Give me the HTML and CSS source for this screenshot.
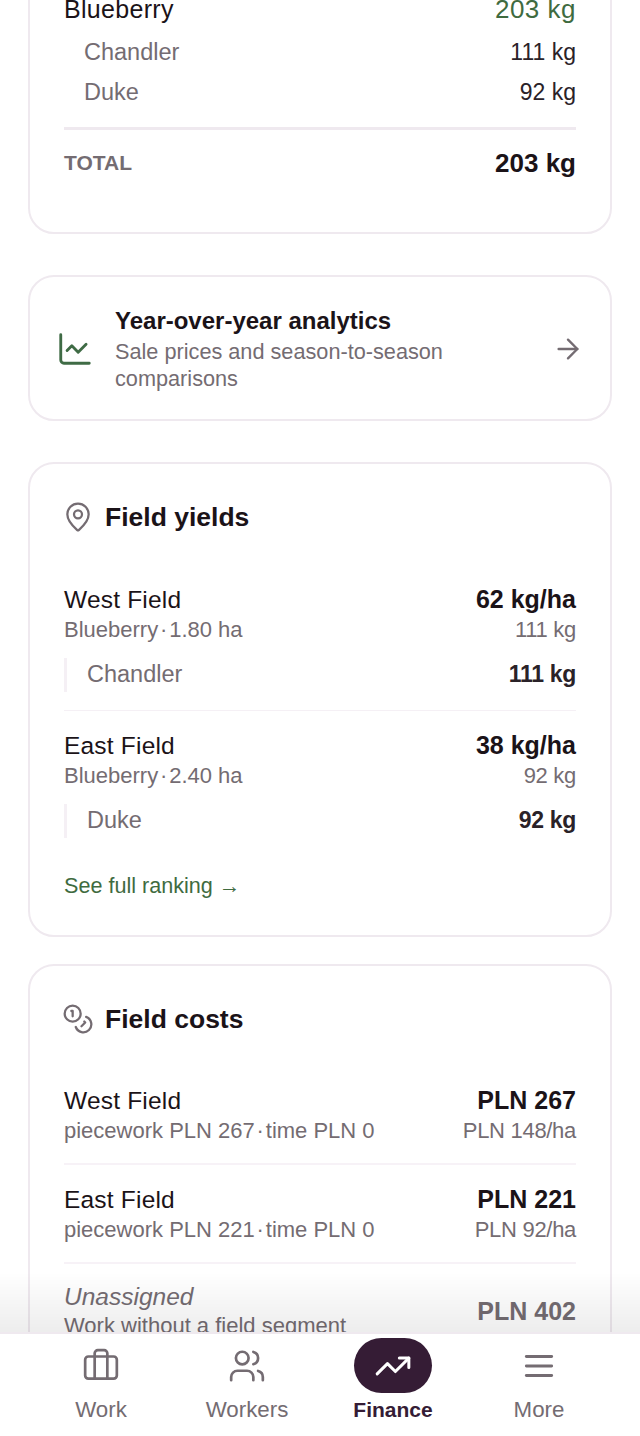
FILE: index.html
```html
<!DOCTYPE html>
<html lang="en">
<head>
    <meta charset="UTF-8">
    <meta name="viewport" content="width=device-width, initial-scale=1.0">
    <title>Finance</title>
    <link rel="stylesheet" href="styles.css">
</head>
<body>
    <main class="scroll">
        <!-- harvest totals, scrolled partly off the top -->
        <section class="card card-totals">
            <div class="row row-crop">
                <span class="crop-name">Blueberry</span>
                <span class="crop-total">203 kg</span>
            </div>
            <div class="row row-variety">
                <span class="variety">Chandler</span>
                <span class="variety-val">111 kg</span>
            </div>
            <div class="row row-variety">
                <span class="variety">Duke</span>
                <span class="variety-val">92 kg</span>
            </div>
            <div class="row row-total">
                <span class="total-label">TOTAL</span>
                <span class="total-val">203 kg</span>
            </div>
        </section>

        <section class="card card-link">
            <svg class="link-icon" width="38" height="38" viewBox="0 0 24 24" fill="none" stroke="#3f6b45" stroke-width="1.8" stroke-linecap="round" stroke-linejoin="round">
                <path d="M3 3v16a2 2 0 0 0 2 2h16"/>
                <path d="m7 13 3-3 4 4 5-5"/>
            </svg>
            <div class="link-text">
                <div class="link-title">Year-over-year analytics</div>
                <div class="link-sub">Sale prices and season-to-season comparisons</div>
            </div>
            <svg class="link-arrow" width="32" height="32" viewBox="0 0 24 24" fill="none" stroke="#746c72" stroke-width="1.8" stroke-linecap="round" stroke-linejoin="round">
                <path d="M5 12h14"/>
                <path d="m12 5 7 7-7 7"/>
            </svg>
        </section>

        <section class="card card-yields">
            <h2 class="card-title">
                <svg width="32" height="32" viewBox="0 0 24 24" fill="none" stroke="#746c72" stroke-width="1.7" stroke-linecap="round" stroke-linejoin="round">
                    <path d="M20 10c0 4.99-5.54 10.19-7.4 11.8a1 1 0 0 1-1.2 0C9.54 20.19 4 14.99 4 10a8 8 0 0 1 16 0"/>
                    <circle cx="12" cy="10" r="3"/>
                </svg>
                Field yields
            </h2>
            <div class="field">
                <div class="row">
                    <span class="name">West Field</span>
                    <span class="strong">62 kg/ha</span>
                </div>
                <div class="row">
                    <span class="meta">Blueberry&#8202;·&#8202;1.80 ha</span>
                    <span class="meta meta-right">111 kg</span>
                </div>
                <div class="row row-sub">
                    <span class="variety">Chandler</span>
                    <span class="sub-val">111 kg</span>
                </div>
            </div>
            <div class="field field-next">
                <div class="row">
                    <span class="name">East Field</span>
                    <span class="strong">38 kg/ha</span>
                </div>
                <div class="row">
                    <span class="meta">Blueberry&#8202;·&#8202;2.40 ha</span>
                    <span class="meta meta-right">92 kg</span>
                </div>
                <div class="row row-sub">
                    <span class="variety">Duke</span>
                    <span class="sub-val">92 kg</span>
                </div>
            </div>
            <a class="more-link">See full ranking →</a>
        </section>

        <section class="card card-costs">
            <h2 class="card-title">
                <svg width="32" height="32" viewBox="0 0 24 24" fill="none" stroke="#746c72" stroke-width="1.7" stroke-linecap="round" stroke-linejoin="round">
                    <circle cx="8" cy="8" r="6"/>
                    <path d="M18.09 10.37A6 6 0 1 1 10.34 18"/>
                    <path d="M7 6h1v4"/>
                    <path d="m16.71 13.88.7.71-2.82 2.82"/>
                </svg>
                Field costs
            </h2>
            <div class="cost">
                <div class="row">
                    <span class="name">West Field</span>
                    <span class="strong">PLN 267</span>
                </div>
                <div class="row">
                    <span class="meta">piecework PLN 267&#8202;·&#8202;time PLN 0</span>
                    <span class="meta meta-right">PLN 148/ha</span>
                </div>
            </div>
            <div class="cost">
                <div class="row">
                    <span class="name">East Field</span>
                    <span class="strong">PLN 221</span>
                </div>
                <div class="row">
                    <span class="meta">piecework PLN 221&#8202;·&#8202;time PLN 0</span>
                    <span class="meta meta-right">PLN 92/ha</span>
                </div>
            </div>
            <div class="cost cost-last">
                <div class="row row-unassigned">
                    <div>
                        <div class="name-italic">Unassigned</div>
                        <div class="meta">Work without a field segment</div>
                    </div>
                    <span class="strong strong-muted">PLN 402</span>
                </div>
            </div>
        </section>
    </main>

    <!-- shadow above the tab bar -->
    <div class="fade"></div>

    <nav class="tabbar">
        <div class="tab">
            <span class="tab-icon">
                <svg width="38" height="38" viewBox="0 0 24 24" fill="none" stroke="#746c72" stroke-width="1.7" stroke-linecap="round" stroke-linejoin="round">
                    <rect x="2" y="6" width="20" height="14" rx="2"/>
                    <path d="M16 20V4a2 2 0 0 0-2-2h-4a2 2 0 0 0-2 2v16"/>
                </svg>
            </span>
            <span class="tab-label">Work</span>
        </div>
        <div class="tab">
            <span class="tab-icon">
                <svg width="38" height="38" viewBox="0 0 24 24" fill="none" stroke="#746c72" stroke-width="1.7" stroke-linecap="round" stroke-linejoin="round">
                    <path d="M16 21v-2a4 4 0 0 0-4-4H6a4 4 0 0 0-4 4v2"/>
                    <circle cx="9" cy="7" r="4"/>
                    <path d="M22 21v-2a4 4 0 0 0-3-3.87"/>
                    <path d="M16 3.13a4 4 0 0 1 0 7.75"/>
                </svg>
            </span>
            <span class="tab-label">Workers</span>
        </div>
        <div class="tab tab-active">
            <span class="tab-icon">
                <svg width="38" height="38" viewBox="0 0 24 24" fill="none" stroke="#ffffff" stroke-width="1.9" stroke-linecap="round" stroke-linejoin="round">
                    <path d="M22 7 13.5 15.5 8.5 10.5 2 17"/>
                    <path d="M16 7h6v6"/>
                </svg>
            </span>
            <span class="tab-label">Finance</span>
        </div>
        <div class="tab">
            <span class="tab-icon">
                <svg width="38" height="38" viewBox="0 0 24 24" fill="none" stroke="#746c72" stroke-width="1.8" stroke-linecap="round">
                    <path d="M4 6h16"/>
                    <path d="M4 12h16"/>
                    <path d="M4 18h16"/>
                </svg>
            </span>
            <span class="tab-label">More</span>
        </div>
    </nav>
</body>
</html>
```

FILE: styles.css
```css
html, body {
    margin: 0;
    height: 100%;
    overflow: hidden;
    background: #ffffff;
}

body {
    font-family: "Liberation Sans", Arial, sans-serif;
    color: #1b1318;
    font-size: 24px;
}

.scroll {
    display: flex;
    flex-direction: column;
    gap: 41px;
    padding: 0 28px;
    margin-top: -39px;
}

.card {
    background: #ffffff;
    border: 2px solid #efe9ef;
    border-radius: 26px;
    padding: 34px;
}

.row {
    display: flex;
    justify-content: space-between;
    align-items: baseline;
    line-height: 32px;
}

.name {
    font-size: 24.5px;
    line-height: 32px;
    letter-spacing: 0.2px;
}

.strong {
    font-size: 25px;
    line-height: 32px;
    font-weight: 700;
}

.strong-muted {
    color: #746c72;
}

/* totals card */
.card-totals {
    padding-top: 30px;
    padding-bottom: 53px;
}

.crop-name {
    font-size: 25px;
    letter-spacing: 0.3px;
}

.crop-total {
    font-size: 26px;
    color: #3f6b3f;
    letter-spacing: 0.5px;
}

.row-crop {
    margin-bottom: 7px;
}

.row-variety {
    padding: 4px 0 4px 20px;
}

.variety {
    font-size: 23.5px;
    line-height: 32px;
    color: #746c72;
}

.variety-val {
    font-size: 23px;
    line-height: 32px;
    color: #2a2228;
}

.row-total {
    align-items: center;
    margin-top: 15px;
    padding-top: 17px;
    border-top: 3px solid #efe9ef;
}

.total-label {
    font-size: 21px;
    font-weight: 700;
    color: #746c72;
}

.total-val {
    font-size: 26px;
    font-weight: 700;
}

/* analytics link */
.card-link {
    display: flex;
    align-items: center;
    gap: 21px;
    padding: 28px 26px 27px 26px;
}

.link-text {
    flex: 1;
}

.link-title {
    font-size: 24px;
    font-weight: 700;
    line-height: 31px;
}

.link-sub {
    margin-top: 2px;
    font-size: 21.7px;
    line-height: 27px;
    color: #746c72;
    max-width: 380px;
}

/* field cards */
.card-yields {
    padding-top: 35px;
    padding-bottom: 34px;
}

.card-costs {
    margin-top: -14px;
    padding-top: 35px;
}

.card-title {
    display: flex;
    align-items: center;
    gap: 11px;
    margin: 0 0 48px -2px;
    font-size: 26.5px;
    line-height: 36px;
    font-weight: 700;
}

.card-costs .card-title {
    margin-bottom: 47px;
}

.meta {
    font-size: 22px;
    line-height: 28px;
    color: #746c72;
}

.meta-right {
    letter-spacing: -0.3px;
}

.field {
    margin-top: 1px;
}

.row-sub {
    margin-top: 14px;
    padding: 0 0 2px 20px;
    border-left: 3px solid #f5f0f5;
}

.sub-val {
    font-weight: 700;
    color: #2a2228;
    font-size: 23px;
    line-height: 32px;
    letter-spacing: -0.3px;
}

.field-next {
    margin-top: 18px;
    padding-top: 18px;
    border-top: 1px solid #f5f0f5;
}

.more-link {
    display: block;
    margin-top: 33px;
    font-size: 21.6px;
    line-height: 30px;
    color: #3f6b3f;
}

.cost {
    padding-bottom: 18px;
    margin-bottom: 18px;
    border-bottom: 2px solid #f7f2f7;
}

.cost-last {
    border-bottom: none;
}

.row-unassigned {
    align-items: center;
}

.name-italic {
    font-style: italic;
    font-size: 24.5px;
    line-height: 30px;
    color: #746c72;
}

/* bottom navigation */
.fade {
    position: fixed;
    left: 0;
    right: 0;
    bottom: 104px;
    height: 60px;
    background: linear-gradient(rgba(0, 0, 0, 0), rgba(0, 0, 0, 0.07));
}

.tabbar {
    position: fixed;
    left: 0;
    right: 0;
    bottom: 0;
    height: 102px;
    background: #ffffff;
    border-top: 2px solid #efe9ef;
    display: grid;
    grid-template-columns: repeat(4, 146px);
    justify-content: center;
}

.tab {
    display: flex;
    flex-direction: column;
    align-items: center;
    padding-top: 4px;
}

.tab-icon {
    width: 78px;
    height: 55px;
    border-radius: 28px;
    display: flex;
    align-items: center;
    justify-content: center;
}

.tab-label {
    margin-top: 2px;
    font-size: 22.3px;
    line-height: 30px;
    color: #746c72;
}

.tab-active .tab-icon {
    background: #351c35;
}

.tab-active .tab-label {
    font-size: 21px;
    font-weight: 700;
    color: #351c35;
}
```
